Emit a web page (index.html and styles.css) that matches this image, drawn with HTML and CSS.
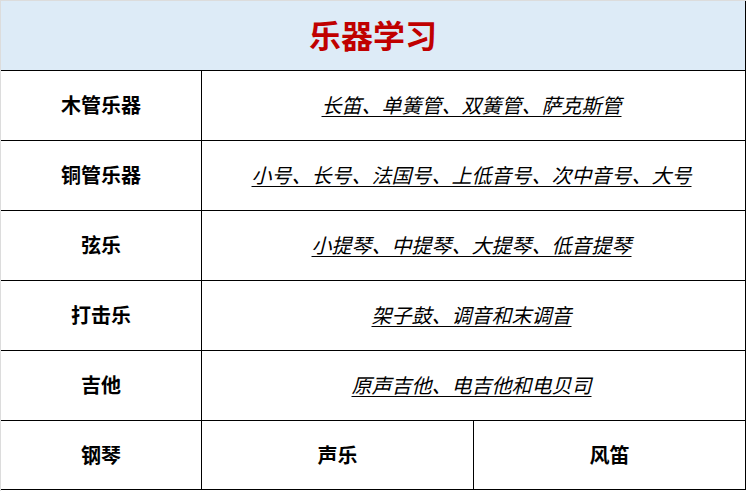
FILE: index.html
```html
<!DOCTYPE html>
<html lang="zh-CN">
<head>
<meta charset="utf-8">
<title>乐器学习</title>
<link rel="stylesheet" href="styles.css">
</head>
<body>
<div class="frame">
  <table class="sheet">
    <colgroup>
      <col class="c1"><col class="c2"><col class="c3">
    </colgroup>
    <tr class="head-row">
      <td colspan="3" class="title">乐器学习</td>
    </tr>
    <tr class="row">
      <td class="label">木管乐器</td>
      <td colspan="2" class="items"><span>长笛、单簧管、双簧管、萨克斯管</span></td>
    </tr>
    <tr class="row">
      <td class="label">铜管乐器</td>
      <td colspan="2" class="items"><span>小号、长号、法国号、上低音号、次中音号、大号</span></td>
    </tr>
    <tr class="row">
      <td class="label">弦乐</td>
      <td colspan="2" class="items"><span>小提琴、中提琴、大提琴、低音提琴</span></td>
    </tr>
    <tr class="row">
      <td class="label">打击乐</td>
      <td colspan="2" class="items"><span>架子鼓、调音和末调音</span></td>
    </tr>
    <tr class="row">
      <td class="label">吉他</td>
      <td colspan="2" class="items"><span>原声吉他、电吉他和电贝司</span></td>
    </tr>
    <tr class="row last">
      <td class="label">钢琴</td>
      <td class="label">声乐</td>
      <td class="label">风笛</td>
    </tr>
  </table>
</div>
</body>
</html>
```

FILE: styles.css
```css
html, body {
  margin: 0;
  padding: 0;
  background: #ffffff;
}

.frame {
  border-top: 1px solid #dcdcdc;
  border-left: 1px solid #dcdcdc;
  width: 745px;
  height: 490px;
  box-sizing: content-box;
}

.sheet {
  border-collapse: separate;
  border-spacing: 0;
  table-layout: fixed;
  width: 745px;
  font-family: "Noto Sans CJK SC", "Noto Sans", sans-serif;
  color: #000000;
}

.c1 { width: 201px; }
.c2 { width: 272px; }
.c3 { width: 272px; }

.sheet td {
  padding: 0 0 2px 0;
  border-right: 1px solid #000000;
  border-bottom: 1px solid #000000;
  text-align: center;
  vertical-align: middle;
  box-sizing: border-box;
}

.head-row td {
  height: 70px;
  padding-bottom: 4px;
}

.row td {
  height: 70px;
}

.row.last td {
  height: 69px;
}

.title {
  background: #ddebf7;
  color: #c00000;
  font-size: 32px;
  font-weight: 700;
}

.label {
  font-size: 20px;
  font-weight: 700;
}

.items {
  font-size: 20px;
  font-weight: 400;
}

.items span {
  font-style: italic;
  text-decoration: underline;
  text-underline-offset: 3px;
  text-decoration-thickness: 1px;
  margin-right: 4px;
}
```
